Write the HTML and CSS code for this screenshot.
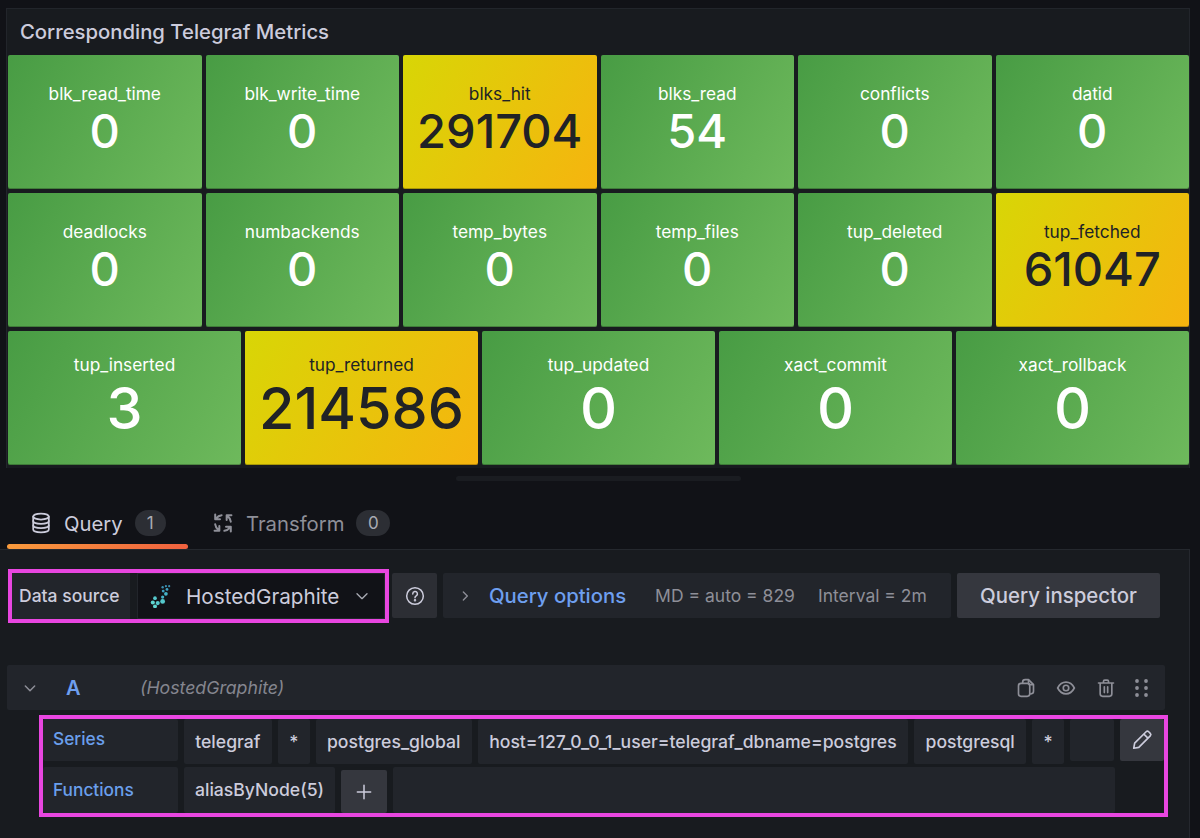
FILE: index.html
```html
<!DOCTYPE html>
<html>
<head>
    <meta charset="UTF-8">
    <meta name="viewport" content="width=device-width, initial-scale=1.0">
    <link rel="stylesheet" href="styles.css">
</head>
<body>
    <div class="panel">
        <div class="panel-title">Corresponding Telegraf Metrics</div>
        <div class="tile-row">
            <div class="tile"><div class="tile-name">blk_read_time</div><div class="tile-value">0</div></div>
            <div class="tile"><div class="tile-name">blk_write_time</div><div class="tile-value">0</div></div>
            <div class="tile warn"><div class="tile-name">blks_hit</div><div class="tile-value">291704</div></div>
            <div class="tile"><div class="tile-name">blks_read</div><div class="tile-value">54</div></div>
            <div class="tile"><div class="tile-name">conflicts</div><div class="tile-value">0</div></div>
            <div class="tile"><div class="tile-name">datid</div><div class="tile-value">0</div></div>
        </div>
        <div class="tile-row">
            <div class="tile"><div class="tile-name">deadlocks</div><div class="tile-value">0</div></div>
            <div class="tile"><div class="tile-name">numbackends</div><div class="tile-value">0</div></div>
            <div class="tile"><div class="tile-name">temp_bytes</div><div class="tile-value">0</div></div>
            <div class="tile"><div class="tile-name">temp_files</div><div class="tile-value">0</div></div>
            <div class="tile"><div class="tile-name">tup_deleted</div><div class="tile-value">0</div></div>
            <div class="tile warn"><div class="tile-name">tup_fetched</div><div class="tile-value">61047</div></div>
        </div>
        <div class="tile-row big">
            <div class="tile"><div class="tile-name">tup_inserted</div><div class="tile-value">3</div></div>
            <div class="tile warn"><div class="tile-name">tup_returned</div><div class="tile-value">214586</div></div>
            <div class="tile"><div class="tile-name">tup_updated</div><div class="tile-value">0</div></div>
            <div class="tile"><div class="tile-name">xact_commit</div><div class="tile-value">0</div></div>
            <div class="tile"><div class="tile-name">xact_rollback</div><div class="tile-value">0</div></div>
        </div>
    </div>

    <div class="splitter"></div>

    <div class="tabs">
        <div class="tab active">
            <svg class="tab-icon" viewBox="0 0 24 24" fill="none" stroke="currentColor" stroke-width="1.900" stroke-linecap="round">
                <ellipse cx="12" cy="5" rx="8.500" ry="3.200"/>
                <path d="M3.500 5v14c0 1.800 3.800 3.200 8.500 3.200s8.500-1.400 8.500-3.200V5"/>
                <path d="M3.500 9.800c0 1.800 3.800 3.200 8.500 3.200s8.500-1.400 8.500-3.200M3.500 14.500c0 1.800 3.800 3.200 8.500 3.200s8.500-1.400 8.500-3.200"/>
            </svg>
            <span>Query</span>
            <span class="count">1</span>
        </div>
        <div class="tab">
            <svg class="tab-icon" viewBox="0 0 24 24" fill="none" stroke="currentColor" stroke-width="2.200" stroke-linecap="round" stroke-linejoin="round">
                <path d="M10.500 3.500C8 3.800 6.200 4.800 4.500 7M3.500 2.800v5.200h5.200"/>
                <path d="M10.500 3.500C8 3.800 6.200 4.800 4.500 7M3.500 2.800v5.200h5.200" transform="rotate(90 12 12)"/>
                <path d="M10.500 3.500C8 3.800 6.200 4.800 4.500 7M3.500 2.800v5.200h5.200" transform="rotate(180 12 12)"/>
                <path d="M10.500 3.500C8 3.800 6.200 4.800 4.500 7M3.500 2.800v5.200h5.200" transform="rotate(270 12 12)"/>
            </svg>
            <span>Transform</span>
            <span class="count">0</span>
        </div>
    </div>

    <div class="editor">
        <div class="toolbar">
            <div class="marked source">
                <div class="source-label">Data source</div>
                <div class="source-select">
                    <svg class="source-logo" viewBox="3 1 19 22">
                        <circle cx="17" cy="3" r="1" fill="#3a8fb0"/>
                        <circle cx="20" cy="3" r="1" fill="#3a8fb0"/>
                        <circle cx="14" cy="4" r="1.100" fill="#3a8fb0"/>
                        <circle cx="18" cy="6" r="1.300" fill="#3fa0bf"/>
                        <circle cx="14.500" cy="7.500" r="1.300" fill="#3fa0bf"/>
                        <circle cx="17" cy="10" r="1.700" fill="#45b3c8"/>
                        <circle cx="14" cy="13" r="1.500" fill="#45b3c8"/>
                        <circle cx="7" cy="14" r="1.700" fill="#55c8cc"/>
                        <circle cx="14" cy="17" r="2.200" fill="#55c8cc"/>
                        <circle cx="9.500" cy="18.500" r="1.900" fill="#55c8cc"/>
                        <circle cx="5" cy="18" r="1.900" fill="#60d6d0"/>
                        <circle cx="7" cy="21.500" r="1.800" fill="#60d6d0"/>
                    </svg>
                    <span class="source-name">HostedGraphite</span>
                    <svg class="chevron" viewBox="0 0 24 24" fill="none" stroke="currentColor" stroke-width="2" stroke-linecap="round" stroke-linejoin="round"><path d="M4.500 8.500l7.500 7.500 7.500-7.500"/></svg>
                </div>
            </div>
            <div class="help-btn">
                <svg viewBox="0 0 24 24" fill="none" stroke="currentColor" stroke-width="1.800" stroke-linecap="round">
                    <circle cx="12" cy="12" r="10"/>
                    <path d="M9.300 9.500a2.800 2.800 0 1 1 4.200 2.400c-1 .6-1.500 1.100-1.500 2.100"/>
                    <circle cx="12" cy="17" r=".6"/>
                </svg>
            </div>
            <div class="query-options">
                <svg class="chevron-right" viewBox="0 0 24 24" fill="none" stroke="currentColor" stroke-width="2" stroke-linecap="round" stroke-linejoin="round"><path d="M9.500 6l6 6-6 6"/></svg>
                <span class="options-title">Query options</span>
                <span class="options-info">MD = auto = 829</span>
                <span class="options-info">Interval = 2m</span>
            </div>
            <div class="inspector-btn">Query inspector</div>
        </div>

        <div class="query-head">
            <svg class="collapse" viewBox="0 0 24 24" fill="none" stroke="currentColor" stroke-width="2.200" stroke-linecap="round" stroke-linejoin="round"><path d="M5 9l7 7 7-7"/></svg>
            <span class="ref-id">A</span>
            <span class="ref-source">(HostedGraphite)</span>
            <div class="head-actions">
                <svg viewBox="0 0 24 24" fill="none" stroke="currentColor" stroke-width="2" stroke-linejoin="round"><path d="M8 6.500V5a3 3 0 0 1 3-3h4l6 6v8a3 3 0 0 1-3 3h-1"/><path d="M15 2v3.500A2.500 2.500 0 0 0 17.500 8H21"/><rect x="3" y="6.500" width="13.500" height="15.500" rx="3"/></svg>
                <svg viewBox="0 0 24 24" fill="none" stroke="currentColor" stroke-width="2"><path d="M2 12c2.300-4.500 5.800-7 10-7s7.700 2.500 10 7c-2.300 4.500-5.800 7-10 7s-7.700-2.500-10-7z"/><circle cx="12" cy="12" r="3.300"/></svg>
                <svg viewBox="0 0 24 24" fill="none" stroke="currentColor" stroke-width="2" stroke-linecap="round" stroke-linejoin="round"><path d="M3 6h18M9 6V4a1.500 1.500 0 0 1 1.500-1.500h3A1.500 1.500 0 0 1 15 4v2M5 6v13a3 3 0 0 0 3 3h8a3 3 0 0 0 3-3V6M10 10.500v7M14 10.500v7"/></svg>
                <svg class="grab" viewBox="0 0 13 18" fill="currentColor"><circle cx="2" cy="2" r="1.900"/><circle cx="11" cy="2" r="1.900"/><circle cx="2" cy="9" r="1.900"/><circle cx="11" cy="9" r="1.900"/><circle cx="2" cy="16" r="1.900"/><circle cx="11" cy="16" r="1.900"/></svg>
            </div>
        </div>

        <div class="marked query-form">
            <div class="form-row">
                <div class="form-label series-label">Series</div>
                <div class="seg seg-telegraf">telegraf</div>
                <div class="seg seg-star">*</div>
                <div class="seg seg-global">postgres_global</div>
                <div class="seg seg-host">host=127_0_0_1_user=telegraf_dbname=postgres</div>
                <div class="seg seg-postgresql">postgresql</div>
                <div class="seg seg-star">*</div>
                <div class="seg seg-empty"></div>
                <div class="seg-edit">
                    <svg viewBox="0 0 24 24" fill="none" stroke="currentColor" stroke-width="1.800" stroke-linejoin="round"><path d="M3 21l1-5.500L16.500 3a2 2 0 0 1 2.800 0l1.700 1.700a2 2 0 0 1 0 2.800L8.500 20z"/><path d="M14 5.500l4.500 4.500"/></svg>
                </div>
            </div>
            <div class="form-row functions">
                <div class="form-label">Functions</div>
                <div class="seg seg-func">aliasByNode(5)</div>
                <div class="seg-add">
                    <svg viewBox="0 0 24 24" fill="none" stroke="currentColor" stroke-width="1.800" stroke-linecap="round"><path d="M12 4v16M4 12h16"/></svg>
                </div>
                <div class="seg seg-fill"></div>
            </div>
        </div>
    </div>
</body>
</html>
```

FILE: styles.css
```css
body {
    margin: 0;
    width: 1200px;
    height: 838px;
    overflow: hidden;
    background-color: #111217;
    font-family: Inter, "Liberation Sans", sans-serif;
    color: #ccccdc;
}

/* stat panel */
.panel {
    margin: 8px 10px 0 6px;
    height: 460px;
    box-sizing: border-box;
    padding: 0 0 0 1px;
    background-color: #181b1f;
    border: 1px solid #22252b;
    border-bottom: none;
}

.panel-title {
    height: 46px;
    line-height: 46px;
    padding-left: 12px;
    font-size: 20.3px;
    font-weight: 500;
}

.tile-row {
    display: grid;
    grid-template-columns: repeat(6, 1fr);
    gap: 4px;
    height: 134px;
    margin-bottom: 4px;
}

.tile-row.big {
    grid-template-columns: repeat(5, 1fr);
    margin-bottom: 0;
}

.tile {
    display: flex;
    flex-direction: column;
    align-items: center;
    padding-top: 29px;
    box-sizing: border-box;
    border-radius: 2px;
    background: linear-gradient(120deg, #489c44, #6eb95c);
    box-shadow: inset 0 -1px rgba(0,0,0,0.25);
    color: #fff;
}

.tile.warn {
    background: linear-gradient(120deg, #d8d606, #f6b40f);
    color: #202226;
}

.tile-name {
    font-size: 17.3px;
    line-height: 20px;
}

.tile-value {
    margin-top: 3px;
    font-size: 47px;
    line-height: 48px;
    font-weight: 500;
}

.big .tile {
    padding-top: 24px;
}

.big .tile-value {
    margin-top: 3px;
    font-size: 57.5px;
    line-height: 60px;
}

.splitter {
    width: 285px;
    height: 5px;
    margin: 8px 0 0 456px;
    border-radius: 3px;
    background-color: #1a1c21;
}

/* tabs */
.tabs {
    display: flex;
    height: 68px;
    box-sizing: border-box;
    padding: 19px 0 0 7px;
}

.tab {
    display: flex;
    align-items: center;
    gap: 12px;
    position: relative;
    height: 49px;
    box-sizing: border-box;
    padding: 2px 0 5px 24px;
    font-size: 20.3px;
    color: #8e8f98;
}

.tab.active {
    width: 181px;
    padding-left: 23px;
    color: #ccccdc;
}

.tab.active::after {
    content: "";
    position: absolute;
    left: 0;
    right: 0;
    bottom: 0;
    height: 5px;
    border-radius: 3px;
    background: linear-gradient(90deg, #f99a3c, #f0613f);
}

.tab-icon {
    width: 22px;
    height: 22px;
    flex-shrink: 0;
}

.count {
    min-width: 31px;
    height: 26px;
    box-sizing: border-box;
    border-radius: 13px;
    background-color: #2c2e34;
    color: #a9abb3;
    font-size: 17px;
    line-height: 26px;
    text-align: center;
}

.tab + .tab .count {
    min-width: 34px;
}

/* query editor */
.editor {
    width: 1190px;
    height: 290px;
    box-sizing: border-box;
    border-top: 1px solid #25282e;
    border-right: 1px solid #25282e;
    background-color: #181b1f;
    padding-top: 19px;
}

.marked {
    box-sizing: border-box;
    border: 4px solid #e846e0;
}

.toolbar {
    display: flex;
    align-items: flex-start;
    height: 54px;
    padding-left: 8px;
}

.source {
    display: flex;
    width: 381px;
    height: 54px;
    flex-shrink: 0;
}

.source-label {
    width: 118px;
    padding-left: 7px;
    box-sizing: border-box;
    line-height: 45px;
    background-color: #22252b;
    font-size: 17.5px;
    font-weight: 500;
}

.source-select {
    display: flex;
    align-items: center;
    width: 248px;
    margin-left: 7px;
    box-sizing: border-box;
    background-color: #111217;
    border: 1px solid #22252b;
    padding-left: 12px;
}

.source-logo {
    width: 22px;
    height: 24px;
    flex-shrink: 0;
}

.source-name {
    margin-left: 14px;
    font-size: 20.7px;
}

.chevron {
    width: 16px;
    height: 16px;
    margin-left: 15px;
    color: #a9abb3;
}

.help-btn {
    width: 45px;
    height: 45px;
    margin: 4px 0 0 3px;
    flex-shrink: 0;
    display: flex;
    align-items: center;
    justify-content: center;
    border-radius: 2px;
    background-color: #2c2e34;
}

.help-btn svg {
    width: 20px;
    height: 20px;
}

.query-options {
    display: flex;
    align-items: center;
    width: 508px;
    height: 45px;
    margin: 4px 0 0 6px;
    flex-shrink: 0;
    box-sizing: border-box;
    padding-left: 14px;
    border-radius: 2px;
    background-color: #22252b;
    font-size: 17.5px;
    color: #8e8f98;
}

.chevron-right {
    width: 16px;
    height: 16px;
    color: #8e8f98;
}

.options-title {
    margin: 0 29px 0 16px;
    font-size: 20.3px;
    font-weight: 500;
    color: #6e9fef;
}

.options-info {
    margin-right: 23px;
}

.inspector-btn {
    width: 203px;
    height: 45px;
    margin: 4px 0 0 6px;
    flex-shrink: 0;
    border-radius: 2px;
    background-color: #35373e;
    font-size: 20.4px;
    font-weight: 500;
    line-height: 45px;
    text-align: center;
}

.query-head {
    display: flex;
    align-items: center;
    width: 1158px;
    height: 45px;
    margin: 42px 0 0 7px;
    border-radius: 2px;
    background-color: #22252b;
}

.collapse {
    width: 16px;
    height: 16px;
    margin-left: 15px;
    color: #8e8f98;
}

.ref-id {
    width: 74px;
    margin-left: 28px;
    font-size: 20px;
    font-weight: 600;
    color: #6e9fef;
}

.ref-source {
    font-size: 17.7px;
    font-style: italic;
    color: #85868f;
}

.head-actions {
    display: flex;
    align-items: center;
    gap: 20px;
    margin-left: auto;
    margin-right: 17px;
    color: #8e8f98;
}

.head-actions svg {
    width: 20px;
    height: 20px;
}

.head-actions .grab {
    width: 13px;
    height: 18px;
    margin-left: -1px;
}

.query-form {
    width: 1129px;
    height: 102px;
    margin: 5px 0 0 39px;
}

.form-row {
    display: flex;
    gap: 6px;
    height: 45px;
}

.form-row.functions {
    height: 46px;
    margin-top: 3px;
}

.form-label {
    width: 135px;
    height: 42px;
    box-sizing: border-box;
    padding-left: 10px;
    border-radius: 2px;
    background-color: #22252b;
    color: #6a9fec;
    font-size: 17.3px;
    font-weight: 500;
    line-height: 40px;
}

.functions .form-label {
    height: 46px;
    line-height: 46px;
}

.seg {
    height: 45px;
    box-sizing: border-box;
    border-radius: 2px;
    background-color: #22252b;
    font-size: 17.6px;
    font-weight: 500;
    line-height: 46px;
    text-align: center;
    white-space: nowrap;
}

.seg-telegraf { width: 88px; }
.seg-star { width: 32px; }
.seg-global { width: 156px; }
.seg-host { width: 431px; }
.seg-postgresql { width: 112px; }
.seg-empty { width: 44px; height: 42px; }
.seg-func { width: 151px; height: 46px; }
.seg-fill { width: 722px; height: 46px; }

.seg-edit {
    width: 44px;
    height: 42px;
    display: flex;
    align-items: center;
    justify-content: center;
    background-color: #35373e;
    border-radius: 2px;
}

.seg-edit svg {
    width: 22px;
    height: 22px;
}

.seg-add {
    width: 46px;
    height: 43px;
    margin-top: 3px;
    display: flex;
    align-items: center;
    justify-content: center;
    background-color: #35373e;
    border-radius: 2px;
}

.seg-add svg {
    width: 20px;
    height: 20px;
}
```
